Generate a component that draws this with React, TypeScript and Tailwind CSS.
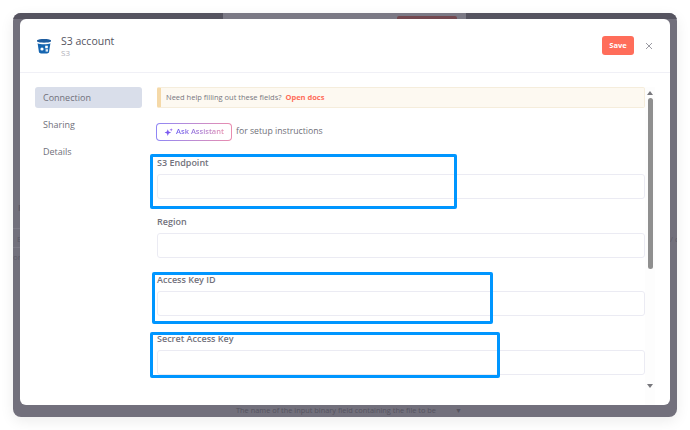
import React from 'react';

// ============================================================
// DATA
// ============================================================

const navItems = ['Connection', 'Sharing', 'Details'];

const fields = [
  { label: 'S3 Endpoint', className: 'mt-[14px]' },
  { label: 'Region', className: 'mt-[15px]' },
  { label: 'Access Key ID', className: 'mt-[14px]' },
  { label: 'Secret Access Key', className: 'mt-[15px]' },
];

// ============================================================
// ICONS
// ============================================================

function BucketIcon() {
  return (
    <svg width="16" height="16" viewBox="0 0 16 16" className="shrink-0">
      <path d="M1 2.2C3 .6 13 .6 15 2.2L15 3.6C13 5.2 3 5.2 1 3.6Z" fill="#1d5c9f" />
      <path d="M1.6 5.2C4 6.5 12 6.5 14.4 5.2L13 14.4C11.6 16 4.4 16 3 14.4Z" fill="#1565b0" />
      <circle cx="6" cy="11" r="1.6" fill="#ffffff" />
      <rect x="9.2" y="7.7" width="2.6" height="2.6" fill="#ffffff" />
      <rect x="9.6" y="11.2" width="2.4" height="2.4" fill="#dbe8f5" />
    </svg>
  );
}

function SparkleIcon() {
  return (
    <svg width="9" height="9" viewBox="0 0 10 10" className="shrink-0">
      <path d="M4.2 1.4L5.2 4 8 5 5.2 6 4.2 9 3.2 6 .6 5 3.2 4Z" fill="#7c5bf0" />
      <path d="M8 .2L8.5 1.5 9.8 2 8.5 2.5 8 3.8 7.5 2.5 6.2 2 7.5 1.5Z" fill="#9a6cf0" />
    </svg>
  );
}

function CloseIcon() {
  return (
    <svg width="8" height="8" viewBox="0 0 8 8" className="shrink-0">
      <path d="M1 1L7 7M7 1L1 7" stroke="#9b9ba3" strokeWidth="1" fill="none" />
    </svg>
  );
}

// ============================================================
// PIECES
// ============================================================

function Field({ label, className }: { label: string; className: string }) {
  return (
    <div className={className}>
      <div className="pt-px text-[9px] leading-[14px] font-semibold text-[#72727c]">{label}</div>
      <div className="mt-[4px] h-[25px] rounded-[3px] border border-[#ebebf3] bg-white" />
    </div>
  );
}

function Scrollbar() {
  return (
    <div className="flex w-[10px] shrink-0 flex-col items-center bg-[#fdfdfd] pt-[4px]">
      <div className="h-0 w-0 border-x-[3px] border-b-[4px] border-x-transparent border-b-[#77777c]" />
      <div className="mt-[3px] h-[171px] w-[5px] rounded-full bg-[#8f8f8f]" />
      <div className="mt-[115px] h-0 w-0 border-x-[3px] border-t-[4px] border-x-transparent border-t-[#77777c]" />
    </div>
  );
}

// ============================================================
// COMPONENT
// ============================================================

export default function App() {
  return (
    <div
      className="relative h-[430px] w-[690px] overflow-hidden bg-white p-[13px]"
      style={{ fontFamily: '"Open Sans", sans-serif' }}
    >
      {/* Dimmed page behind the dialog */}
      <div className="relative flex h-[404px] flex-col overflow-hidden rounded-[8px] bg-[#72707c] shadow-[0_4px_14px_rgba(0,0,0,0.08)]">
        <div className="flex h-[6px] shrink-0 bg-[#55535f]">
          <div className="ml-[210px] flex w-[243px] bg-[#7b7985]">
            <div className="mt-[3px] ml-[174px] h-[3px] w-[60px] rounded-t-[2px] bg-[#73484f]" />
          </div>
        </div>

        <div className="flex h-[386px] shrink-0">
          {/* Page text cut off left of the dialog */}
          <div className="flex w-[7px] shrink-0 flex-col overflow-hidden pt-[184px] text-[8px] leading-[10px] text-[#5d5b67]">
            <div className="pl-[5px] font-bold">R</div>
            <div className="mt-[15px] h-px bg-[#7d7b87]" />
            <div className="mt-[5px] pl-[4px]">E</div>
            <div className="mt-[3px] h-px bg-[#7d7b87]" />
            <div className="mt-[4px] whitespace-nowrap">or</div>
          </div>

          <div className="flex w-[650px] shrink-0 flex-col rounded-[6px] bg-white">
            {/* Header */}
            <div className="flex h-[54px] shrink-0 items-center border-b border-[#f0f0f6] pr-[17px] pl-[16px]">
              <BucketIcon />
              <div className="ml-[9px] flex-1">
                <div className="text-[10.5px] leading-[14px] text-[#55555f]">S3 account</div>
                <div className="text-[8px] leading-[10px] text-[#b0b0b8]">S3</div>
              </div>
              <button className="h-[19px] w-[32px] rounded-[3px] bg-[#ff6d5a] text-[7.5px] font-bold text-white">
                Save
              </button>
              <div className="ml-[11px]">
                <CloseIcon />
              </div>
            </div>

            {/* Body */}
            <div className="flex min-h-0 flex-1 pt-[14px] pl-[15px]">
              <div className="w-[107px] shrink-0">
                {navItems.map((item, i) => (
                  <div
                    key={item}
                    className={`mb-[6px] flex h-[21px] items-center rounded-[3px] pl-[8px] text-[9px] text-[#70707a] ${
                      i === 0 ? 'bg-[#d9deea]' : ''
                    }`}
                  >
                    {item}
                  </div>
                ))}
              </div>

              <div className="ml-[15px] w-[488px] shrink-0">
                <div className="flex h-[21px] items-center rounded-[2px] border border-l-[4px] border-[#f5eddc] border-l-[#f5d9a8] bg-[#fdf9f1] pl-[5px] text-[7.5px] text-[#777780]">
                  Need help filling out these fields?
                  <span className="ml-[4px] font-bold text-[#ff6d5a]">Open docs</span>
                </div>

                <div className="mt-[15px] flex h-[18px] items-center">
                  <div className="-ml-px h-[18px] w-[76px] rounded-[4px] bg-gradient-to-r from-[#8f86f5] to-[#ea8cae] p-px">
                    <div className="flex h-full items-center justify-center gap-[3px] rounded-[3px] bg-white">
                      <SparkleIcon />
                      <span className="bg-gradient-to-r from-[#6e5bf0] to-[#e58fb0] bg-clip-text text-[7.5px] font-semibold text-transparent">
                        Ask Assistant
                      </span>
                    </div>
                  </div>
                  <span className="ml-[4px] text-[8.7px] text-[#6f6f78]">for setup instructions</span>
                </div>

                {fields.map((field) => (
                  <Field key={field.label} label={field.label} className={field.className} />
                ))}
              </div>

              <Scrollbar />
            </div>
          </div>

          {/* Page text cut off right of the dialog */}
          <div className="w-[7px] shrink-0 overflow-hidden pt-[215px] text-[8px] leading-[10px] whitespace-nowrap text-[#5d5b67]">
            / c
          </div>
        </div>

        {/* What shows below the dialog */}
        <div className="flex h-[12px] items-center text-[7.4px] text-[#55535f]">
          <span className="ml-[223px]">The name of the input binary field containing the file to be</span>
          <span className="ml-[19px] text-[7px]">▼</span>
        </div>
      </div>

      {/* Annotation boxes drawn over the screenshot */}
      <div className="absolute top-[154px] left-[150px] h-[55px] w-[307px] rounded-[2px] border-3 border-[#0096ff]" />
      <div className="absolute top-[272px] left-[152px] h-[52px] w-[341px] rounded-[2px] border-3 border-[#0096ff]" />
      <div className="absolute top-[332px] left-[150px] h-[46px] w-[350px] rounded-[2px] border-3 border-[#0096ff]" />
    </div>
  );
}
